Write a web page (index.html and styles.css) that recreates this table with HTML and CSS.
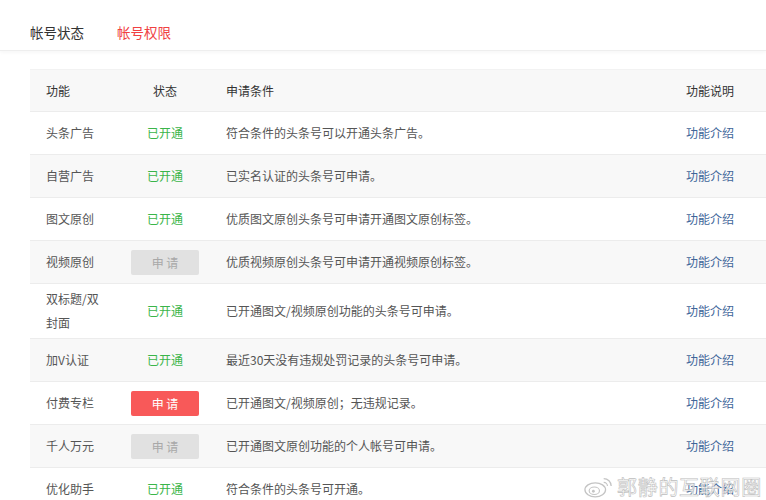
FILE: index.html
```html
<!DOCTYPE html>
<html lang="zh">
<head>
<meta charset="utf-8">
<link rel="stylesheet" href="styles.css">
</head>
<body>
<div class="tabs">
  <span class="tab">帐号状态</span>
  <span class="tab active">帐号权限</span>
</div>
<div class="table">
  <div class="row head">
    <div class="c1">功能</div><div class="c2">状态</div><div class="c3">申请条件</div><div class="c4">功能说明</div>
  </div>
  <div class="row">
    <div class="c1">头条广告</div><div class="c2 on">已开通</div><div class="c3">符合条件的头条号可以开通头条广告。</div><div class="c4 link">功能介绍</div>
  </div>
  <div class="row alt">
    <div class="c1">自营广告</div><div class="c2 on">已开通</div><div class="c3">已实名认证的头条号可申请。</div><div class="c4 link">功能介绍</div>
  </div>
  <div class="row">
    <div class="c1">图文原创</div><div class="c2 on">已开通</div><div class="c3">优质图文原创头条号可申请开通图文原创标签。</div><div class="c4 link">功能介绍</div>
  </div>
  <div class="row alt">
    <div class="c1">视频原创</div><div class="c2"><span class="btn off">申 请</span></div><div class="c3">优质视频原创头条号可申请开通视频原创标签。</div><div class="c4 link">功能介绍</div>
  </div>
  <div class="row">
    <div class="c1">双标题/双封面</div><div class="c2 on">已开通</div><div class="c3">已开通图文/视频原创功能的头条号可申请。</div><div class="c4 link">功能介绍</div>
  </div>
  <div class="row alt">
    <div class="c1">加V认证</div><div class="c2 on">已开通</div><div class="c3">最近30天没有违规处罚记录的头条号可申请。</div><div class="c4 link">功能介绍</div>
  </div>
  <div class="row">
    <div class="c1">付费专栏</div><div class="c2"><span class="btn red">申 请</span></div><div class="c3">已开通图文/视频原创；无违规记录。</div><div class="c4 link">功能介绍</div>
  </div>
  <div class="row alt">
    <div class="c1">千人万元</div><div class="c2"><span class="btn off">申 请</span></div><div class="c3">已开通图文原创功能的个人帐号可申请。</div><div class="c4 link">功能介绍</div>
  </div>
  <div class="row">
    <div class="c1">优化助手</div><div class="c2 on">已开通</div><div class="c3">符合条件的头条号可开通。</div><div class="c4 link">功能介绍</div>
  </div>
</div>
<div class="watermark">
  <svg class="wb" width="30" height="24" viewBox="0 0 32 24">
    <ellipse cx="12" cy="15" rx="11" ry="7.5" fill="none" stroke="#c4c4c4" stroke-width="1.4"/>
    <ellipse cx="11" cy="16" rx="5.5" ry="4" fill="none" stroke="#c4c4c4" stroke-width="1.2"/>
    <circle cx="10" cy="16.5" r="1.5" fill="#c4c4c4"/>
    <path d="M21 3 a8 8 0 0 1 8 8" fill="none" stroke="#c4c4c4" stroke-width="1.4"/>
    <path d="M21 7 a4 4 0 0 1 4 4" fill="none" stroke="#c4c4c4" stroke-width="1.2"/>
  </svg>
  <span class="wt">郭静的互联网圈</span>
</div>
</body>
</html>
```
FILE: styles.css
```css
html, body {
  margin: 0;
  padding: 0;
  background: #fff;
}
body {
  font-family: "Noto Sans CJK SC", "Liberation Sans", sans-serif;
  color: #555;
  font-size: 12px;
  overflow: hidden;
  height: 500px;
  position: relative;
}
.tabs {
  height: 51px;
  box-sizing: border-box;
  display: flex;
  align-items: center;
  gap: 33px;
  padding: 13px 30px 0;
  border-bottom: 1px solid #eeeeee;
  box-shadow: 0 2px 3px rgba(0, 0, 0, 0.03);
}
.tab {
  font-size: 13.5px;
  color: #333;
  line-height: 20px;
}
.tab.active {
  color: #f04142;
}
.table {
  margin: 18px 0 0 30px;
}
.row {
  display: flex;
  align-items: center;
  min-height: 43px;
  box-sizing: border-box;
  padding: 3px 0;
  border-bottom: 1px solid #ececec;
  line-height: 24px;
}
.row.head {
  background: #f8f8f8;
  color: #333;
  border-top: 1px solid #f2f2f2;
}
.row.alt {
  background: #f8f8f8;
}
.c1 {
  width: 60px;
  padding: 0 25px 0 16px;
  flex: none;
}
.c2 {
  width: 68px;
  flex: none;
  text-align: center;
}
.c3 {
  flex: 1;
  padding-left: 27px;
}
.c4 {
  flex: none;
  padding-right: 32px;
  text-align: right;
}
.on {
  color: #3ab54a;
}
.link {
  color: #406599;
}
.btn {
  display: block;
  height: 25px;
  line-height: 25px;
  border-radius: 2px;
  text-align: center;
  font-size: 12px;
}
.btn.off {
  background: #e1e1e1;
  color: #a8a8a8;
}
.btn.red {
  background: #f85959;
  color: #fff;
}
.watermark {
  position: absolute;
  left: 584px;
  top: 474px;
  display: flex;
  align-items: center;
  gap: 3px;
  white-space: nowrap;
  pointer-events: none;
}
.wt {
  font-size: 20px;
  line-height: 26px;
  color: rgba(255, 255, 255, 0.75);
  -webkit-text-stroke: 0.6px #bdbdbd;
  letter-spacing: 0.7px;
}
```
